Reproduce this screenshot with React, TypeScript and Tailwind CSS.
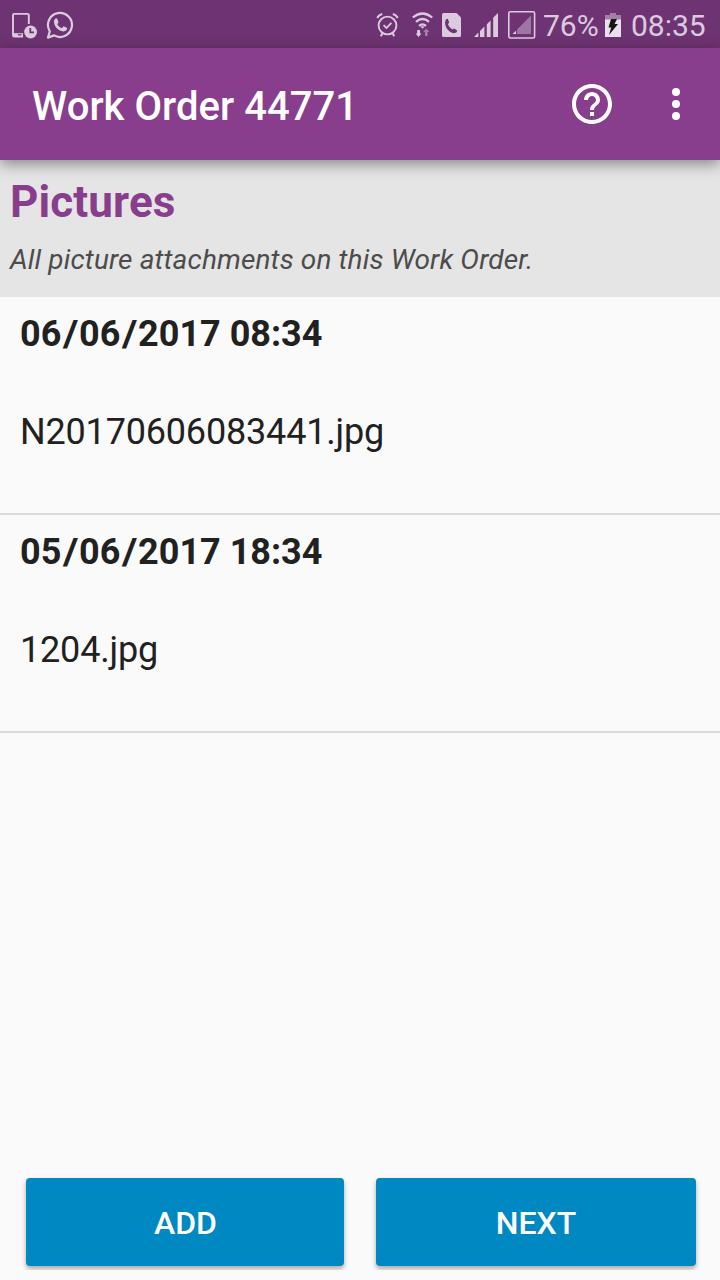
import React from "react";

function PhoneClockIcon() {
  return (
    <svg className="ml-3 shrink-0" width="26" height="28" viewBox="12 12 26 28" fill="none">
      <path d="M28.8 24V15.2Q28.8 13.9 27.5 13.9H14.3Q13 13.9 13 15.2V35.2Q13 36.5 14.3 36.5H23" stroke="#dccbdf" strokeWidth="1.9" />
      <path d="M13 33.2H23V37H13Z" fill="#dccbdf" />
      <path d="M18 34.8H21.5" stroke="#6e3372" strokeWidth="1.3" />
      <circle cx="30.6" cy="32" r="6.4" fill="#dccbdf" />
      <path d="M30.3 28V32.3H34" stroke="#6e3372" strokeWidth="1.8" />
    </svg>
  );
}

function WhatsAppIcon() {
  return (
    <svg className="ml-2 shrink-0" width="30" height="30" viewBox="46.8 11 30 30" fill="none">
      <path d="M48.8 37.6L50.6 31.3A12 12 0 1 1 54.9 35.4Z" stroke="#dccbdf" strokeWidth="2.2" strokeLinejoin="round" />
      <path d="M54.9 20.2Q56.2 17.6 57.8 18.4L59.3 22Q59 23.2 58 24.2Q59.6 27 62.6 28.2L64.4 26.3L68 28Q67.6 31.2 64.2 31.4C58.6 31 54 25.4 54.9 20.2Z" fill="#dccbdf" />
    </svg>
  );
}

function AlarmIcon() {
  return (
    <svg className="shrink-0" width="24" height="28" viewBox="376 12 24 28" fill="none" stroke="#dccbdf">
      <circle cx="387.5" cy="25.5" r="8.9" strokeWidth="1.9" />
      <path d="M383.6 25.2L386.4 28L391.4 22.8" strokeWidth="1.8" />
      <path d="M377.3 18Q378.6 14.9 382.2 14M397.7 18Q396.4 14.9 392.8 14M382.6 33L380.8 36.2M392.4 33L394.2 36.2" strokeWidth="2" />
    </svg>
  );
}

function WifiIcon() {
  return (
    <svg className="ml-3 shrink-0" width="22" height="28" viewBox="412 12 22 28" fill="none">
      <path d="M412.8 17.5Q422.5 9.5 432.2 17.5M416 21.8Q422.5 16.2 429 21.8M419 25.8Q422.5 22.8 426 25.8" stroke="#dccbdf" strokeWidth="2.2" />
      <path d="M420.3 26.3H424.7L422.5 28.8Z" fill="#dccbdf" />
      <path d="M417.2 30H420V33.4H421.6L418.6 37L415.6 33.4H417.2Z" fill="#dccbdf" />
      <path d="M425 36V32H423.2L426.3 28.4L429.4 32H427.6V36Z" fill="#a57da9" />
    </svg>
  );
}

function SimCallIcon() {
  return (
    <svg className="ml-2 shrink-0" width="20" height="28" viewBox="442 12 20 28">
      <path d="M443.5 13H456.5L461 17.5V35.5Q461 37 459.5 37H443.5Q442 37 442 35.5V14.5Q442 13 443.5 13Z" fill="#dccbdf" />
      <path d="M445.2 21.2Q446 18.6 447.9 18.9L449.2 22.6L447.9 24.2Q449.2 27.6 452.4 29.6L454.2 28.6L457.4 30.8Q456.8 33.2 454 33.2C448.4 32.4 444.4 26.6 445.2 21.2Z" fill="#6e3372" />
    </svg>
  );
}

function SignalIcon() {
  return (
    <svg className="ml-3 shrink-0" width="24" height="28" viewBox="474 12 24 28" fill="#dccbdf">
      <path d="M474 37L478.4 32.6V37ZM480 31L484.4 26.6V37H480ZM486.8 24.2L490.6 20.4V37H486.8ZM493.2 17.8L498 13V37H493.2Z" />
    </svg>
  );
}

function EmptySignalIcon() {
  return (
    <svg className="ml-2.5 shrink-0" width="28" height="30" viewBox="508 11 28 30">
      <rect x="508.8" y="11.8" width="25.8" height="26.2" rx="1.4" fill="none" stroke="#dccbdf" strokeWidth="1.6" />
      <path d="M517 29.5L531 15.5V34H517Z" fill="#9f75a3" />
      <path d="M512.5 34L516 30.8V34Z" fill="#dccbdf" />
    </svg>
  );
}

function BatteryIcon() {
  return (
    <svg className="shrink-0" width="16" height="28" viewBox="605 12 16 28">
      <path d="M610 13H616V15H621V20H605V15H610Z" fill="#a57da9" />
      <path d="M605 19.5H621V37H605Z" fill="#eadfec" />
      <path d="M611 19H617L614.5 24H618L609 35L611.2 27.5H608.5Z" fill="#171717" />
    </svg>
  );
}

function StatusBar() {
  return (
    <div className="flex h-12 shrink-0 items-center bg-[#6e3372] pt-1 text-[30px] leading-9 text-[#dccbdf]">
      <PhoneClockIcon />
      <WhatsAppIcon />
      <div className="ml-auto flex items-center">
        <AlarmIcon />
        <WifiIcon />
        <SimCallIcon />
        <SignalIcon />
        <EmptySignalIcon />
      </div>
      <span className="ml-[7px] w-[62px] whitespace-nowrap">76%</span>
      <BatteryIcon />
      <span className="ml-2.5 w-[89px] whitespace-nowrap">08:35</span>
    </div>
  );
}

function AppBar() {
  return (
    <header className="relative z-10 flex h-28 shrink-0 items-center bg-[#883e8c] pl-8 text-white shadow-[0_4px_14px_rgba(0,0,0,0.42)]">
      <h1 className="grow pt-1.5 text-[40px] font-medium leading-12 tracking-[0.05px]">Work Order 44771</h1>
      <svg className="mr-9 shrink-0" width="48" height="48" viewBox="0 0 24 24" fill="currentColor">
        <path d="M11 18h2v-2h-2v2zm1-16C6.48 2 2 6.48 2 12s4.480 10 10 10 10-4.480 10-10S17.520 2 12 2zm0 18c-4.410 0-8-3.590-8-8s3.590-8 8-8 8 3.590 8 8-3.590 8-8 8zm0-14c-2.210 0-4 1.790-4 4h2c0-1.100.9-2 2-2s2 .9 2 2c0 2-3 1.750-3 5h2c0-2.250 3-2.500 3-5 0-2.210-1.790-4-4-4z" />
      </svg>
      <svg className="mr-5 shrink-0" width="48" height="48" viewBox="0 0 24 24" fill="currentColor">
        <circle cx="12" cy="6" r="2" />
        <circle cx="12" cy="12" r="2" />
        <circle cx="12" cy="18" r="2" />
      </svg>
    </header>
  );
}

const attachments = [
  { date: "06/06/2017 08:34", file: "N20170606083441.jpg" },
  { date: "05/06/2017 18:34", file: "1204.jpg" },
];

function DateLabel({ value }: { value: string }) {
  return (
    <p className="font-bold">
      {value.split("/").map((part, i) => (
        <React.Fragment key={i}>
          {i > 0 && <span className="mx-[2.2px] inline-block scale-x-115">/</span>}
          {part}
        </React.Fragment>
      ))}
    </p>
  );
}

export default function App() {
  return (
    <div className="flex h-[1280px] w-[720px] flex-col overflow-hidden bg-[#fafafa] font-[Roboto,sans-serif]">
      <StatusBar />
      <AppBar />
      <section className="h-[137px] shrink-0 bg-[#e5e5e5] px-2.5 pt-4">
        <h2 className="text-[44px] font-bold leading-[52px] tracking-[0.12px] text-[#883e8c]">Pictures</h2>
        <p className="mt-[15px] text-[28px] italic leading-[34px] tracking-[0.14px] text-[#4c4c4c]">
          All picture attachments on this Work Order.
        </p>
      </section>
      <ul className="grow">
        {attachments.map((a) => (
          <li key={a.file} className="h-[218px] border-b-2 border-[#dadada] px-5 pt-4 text-[36px] leading-[42px] text-[#212121]">
            <DateLabel value={a.date} />
            <p className="mt-14 tracking-[-0.18px]">{a.file}</p>
          </li>
        ))}
      </ul>
      <div className="mb-2.5 flex h-[100px] shrink-0 gap-8 overflow-hidden pl-[26px] pr-6 pt-2 text-[32px] font-medium text-white">
        <button className="h-[88px] w-[318px] rounded bg-[#0088c3] pl-px pt-px shadow-[0_3px_5px_rgba(0,0,0,0.32)]">ADD</button>
        <button className="h-[88px] w-[320px] rounded bg-[#0088c3] pt-px shadow-[0_3px_5px_rgba(0,0,0,0.32)]">NEXT</button>
      </div>
    </div>
  );
}
